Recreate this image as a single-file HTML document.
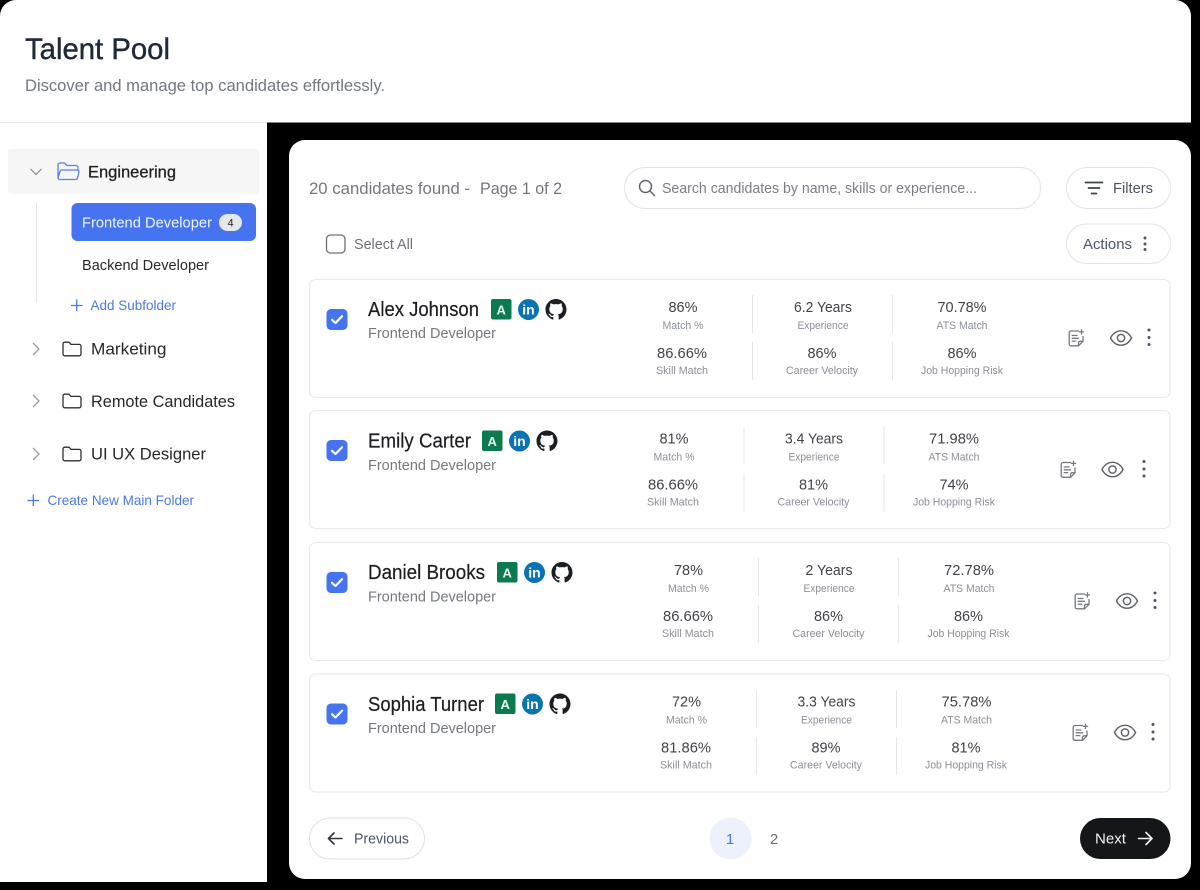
<!DOCTYPE html>
<html><head><meta charset="utf-8"><title>Talent Pool</title>
<style>
html,body{margin:0;padding:0;background:#000;width:1200px;height:890px;overflow:hidden}
svg{display:block}
text{font-family:"Liberation Sans",sans-serif}
.v{font-size:15px;fill:#404349;text-anchor:middle}
.l{font-size:11px;fill:#8b8f97;text-anchor:middle}
.n{font-size:20px;fill:#1c1d20;stroke:#1c1d20;stroke-width:.2px}
.s{font-size:15px;fill:#75797f}
.bl{font-size:14px;fill:#4b78e6}
.f{font-size:17px;fill:#26282c}
.b{font-size:15px;fill:#4b5563}
.a{font-size:13px;font-weight:700;fill:#e8f5ee;text-anchor:middle}
</style></head><body>
<svg width="1200" height="890" viewBox="0 0 1200 890" xmlns="http://www.w3.org/2000/svg">
<defs>
<symbol id="gh" viewBox="0 0 16 16" overflow="visible"><path fill="#1b1f24" d="M8 0C3.58 0 0 3.58 0 8c0 3.54 2.29 6.53 5.47 7.59.4.07.55-.17.55-.38 0-.19-.01-.82-.01-1.49-2.01.37-2.53-.49-2.69-.94-.09-.23-.48-.94-.82-1.13-.28-.15-.68-.52-.01-.53.63-.01 1.08.58 1.23.82.72 1.21 1.87.87 2.33.66.07-.52.28-.87.51-1.07-1.78-.2-3.64-.89-3.64-3.95 0-.87.31-1.59.82-2.15-.08-.2-.36-1.02.08-2.12 0 0 .67-.21 2.2.82.64-.18 1.32-.27 2-.27.68 0 1.36.09 2 .27 1.53-1.04 2.2-.82 2.2-.82.44 1.1.16 1.92.08 2.12.51.56.82 1.27.82 2.15 0 3.07-1.87 3.75-3.65 3.95.29.25.54.73.54 1.48 0 1.07-.01 1.93-.01 2.2 0 .21.15.46.55.38A8.013 8.013 0 0016 8c0-4.42-3.58-8-8-8z"/></symbol>
<symbol id="note" viewBox="0 0 18 18" overflow="visible"><g fill="none" stroke="#75797f" stroke-width="1.300" stroke-linecap="round" stroke-linejoin="round"><path d="M10.5 2H3a1.8 1.8 0 0 0-1.8 1.8V15A1.8 1.8 0 0 0 3 16.800H10.500L15 12.300V7.500"/><path d="M10.500 16.800V13.800A1.500 1.500 0 0 1 12 12.300H15"/><path d="M4.200 6.500H9M4.200 9.300H10.500M4.200 12.100H7.800"/><path d="M13.500 .8V5M11.400 2.900H15.600"/></g></symbol>
<symbol id="eye" viewBox="0 0 24 18" overflow="visible"><g fill="none" stroke="#5f6268" stroke-width="1.500"><path d="M1 9C3.800 3.800 7.800 1.500 12 1.500S20.200 3.800 23 9C20.200 14.200 16.200 16.500 12 16.500S3.800 14.200 1 9Z"/><circle cx="12" cy="9" r="3.800"/></g></symbol>
<symbol id="chk" viewBox="0 0 21 21" overflow="visible"><rect x="0" y="0" width="21" height="21" rx="4.500" fill="#4673f0"/><path d="M5.500 10.800L9 14L15.500 7.200" fill="none" stroke="#fff" stroke-width="2.200" stroke-linecap="round" stroke-linejoin="round"/></symbol>
<symbol id="fold" viewBox="0 0 20 16" overflow="visible"><path d="M1 3A1.800 1.800 0 0 1 2.800 1.200H7L9 3.400H17.200A1.800 1.800 0 0 1 19 5.200V13A1.800 1.800 0 0 1 17.200 14.800H2.800A1.800 1.800 0 0 1 1 13Z" fill="none" stroke="#2d2f33" stroke-width="1.300" stroke-linejoin="round"/></symbol>
</defs>

<rect width="1200" height="890" fill="#000"/>
<!-- header -->
<path d="M16 0H1175A16 16 0 0 1 1191 16V122.500H0V16A16 16 0 0 1 16 0Z" fill="#fff"/>
<rect x="0" y="122" width="267" height="1" fill="#e8e9eb"/>
<text x="25" y="59" font-size="30" fill="#1f2937" textLength="145" lengthAdjust="spacingAndGlyphs" stroke="#1f2937" stroke-width=".4">Talent Pool</text>
<text x="25" y="91" font-size="17" fill="#737780" textLength="360" lengthAdjust="spacingAndGlyphs">Discover and manage top candidates effortlessly.</text>

<!-- sidebar -->
<rect x="0" y="123" width="267" height="759" fill="#fff"/>
<rect x="8" y="149" width="251" height="45" rx="3" fill="#f6f6f7"/>
<path d="M30.500 169L36 174.500L41.500 169" fill="none" stroke="#8f9297" stroke-width="1.300"/>
<path d="M58 165A2 2 0 0 1 60 163H64.500L67 165.500H76A2 2 0 0 1 78 167.500V169.500M58 165V177.500A2 2 0 0 0 60 179.500H75.500A2 2 0 0 0 77.500 178L79 172A1.800 1.800 0 0 0 77 170H62A2 2 0 0 0 60 171.500L58 178" fill="none" stroke="#5c80e8" stroke-width="1.300" stroke-linejoin="round"/>
<text x="88" y="177.500" class="f" style="fill:#1f2024" textLength="88" lengthAdjust="spacingAndGlyphs" stroke="#1f2024" stroke-width=".3">Engineering</text>
<rect x="36" y="203" width="1" height="100" fill="#e3e4e7"/>
<rect x="71.500" y="203" width="184.500" height="38" rx="6" fill="#4673f0"/>
<text x="82" y="227.500" font-size="15" fill="#f2f5ff" textLength="130" lengthAdjust="spacingAndGlyphs">Frontend Developer</text>
<rect x="219" y="214" width="23" height="17" rx="8.500" fill="#e7e8ec"/>
<text x="230.500" y="226.500" font-size="11" fill="#222" text-anchor="middle">4</text>
<text x="82" y="270" font-size="15" fill="#27292d" textLength="127" lengthAdjust="spacingAndGlyphs">Backend Developer</text>
<path d="M71 305.500H82.500M76.700 299.500V311" stroke="#4b78e6" stroke-width="1.300" fill="none"/>
<text x="90.500" y="310" class="bl" textLength="85.500" lengthAdjust="spacingAndGlyphs">Add Subfolder</text>

<path d="M33 343L39 349L33 355" fill="none" stroke="#999ca1" stroke-width="1.300"/>
<use href="#fold" x="62" y="341" width="20" height="16"/>
<text x="91" y="354.500" class="f" textLength="75.500" lengthAdjust="spacingAndGlyphs">Marketing</text>
<path d="M33 395L39 401L33 407" fill="none" stroke="#999ca1" stroke-width="1.300"/>
<use href="#fold" x="62" y="393" width="20" height="16"/>
<text x="91" y="407" class="f" textLength="144" lengthAdjust="spacingAndGlyphs">Remote Candidates</text>
<path d="M33 448L39 454L33 460" fill="none" stroke="#999ca1" stroke-width="1.300"/>
<use href="#fold" x="62" y="446" width="20" height="16"/>
<text x="91" y="459.500" class="f" textLength="115" lengthAdjust="spacingAndGlyphs">UI UX Designer</text>
<path d="M27.500 500.500H39M33.300 494.500V506" stroke="#4b78e6" stroke-width="1.300" fill="none"/>
<text x="47.500" y="505" class="bl" textLength="146.500" lengthAdjust="spacingAndGlyphs">Create New Main Folder</text>

<!-- main panel -->
<rect x="289" y="140" width="902" height="739" rx="16" fill="#fff"/>
<text x="309" y="194" font-size="17" fill="#73777e" textLength="161" lengthAdjust="spacingAndGlyphs">20 candidates found -</text>
<text x="480" y="194" font-size="17" fill="#73777e" textLength="82" lengthAdjust="spacingAndGlyphs">Page 1 of 2</text>
<rect x="624.500" y="167.500" width="416" height="41" rx="20.500" fill="#fff" stroke="#e2e4e7"/>
<circle cx="645.500" cy="186.500" r="6" fill="none" stroke="#63676e" stroke-width="1.500"/>
<path d="M650 191L654.500 195.500" stroke="#63676e" stroke-width="1.500" stroke-linecap="round"/>
<text x="662" y="193" font-size="15" fill="#7a7e86" textLength="315" lengthAdjust="spacingAndGlyphs">Search candidates by name, skills or experience...</text>
<rect x="1066.500" y="167.500" width="104" height="41" rx="20.500" fill="#fff" stroke="#e2e4e7"/>
<path d="M1085.500 182.500H1102.500M1088.500 188H1099.500M1091.500 193.500H1096.500" stroke="#3f434a" stroke-width="1.700" stroke-linecap="round"/>
<text x="1113" y="193" class="b" textLength="40" lengthAdjust="spacingAndGlyphs">Filters</text>
<rect x="326.500" y="235" width="18.500" height="18" rx="4" fill="#fff" stroke="#6b6f76" stroke-width="1.300"/>
<text x="354" y="249" font-size="15" fill="#6d7178" textLength="59" lengthAdjust="spacingAndGlyphs">Select All</text>
<rect x="1066.500" y="224" width="104" height="39.500" rx="19.750" fill="#fff" stroke="#e2e4e7"/>
<text x="1083" y="249" class="b" textLength="49" lengthAdjust="spacingAndGlyphs">Actions</text>
<circle cx="1145" cy="238" r="1.500" fill="#4b5563"/><circle cx="1145" cy="244" r="1.500" fill="#4b5563"/><circle cx="1145" cy="249.500" r="1.500" fill="#4b5563"/>

<!-- card 1 -->
<rect x="309.500" y="279.500" width="860.500" height="118" rx="6" fill="#fff" stroke="#e9eaec"/>
<use href="#chk" x="326.500" y="309" width="21" height="21"/>
<text x="368" y="316" class="n" textLength="111" lengthAdjust="spacingAndGlyphs">Alex Johnson</text>
<text x="368" y="338" class="s" textLength="128" lengthAdjust="spacingAndGlyphs">Frontend Developer</text>
<rect x="491" y="299" width="20.500" height="20.500" rx="2" fill="#0b7a4f"/><text x="501.200" y="314.500" class="a">A</text>
<circle cx="528.500" cy="309.500" r="10.500" fill="#0a73b1"/><text x="528.500" y="314.500" font-size="14" font-weight="700" fill="#fff" text-anchor="middle">in</text>
<use href="#gh" x="545.500" y="299" width="21" height="21"/>
<g>
<text x="683" y="312" class="v" textLength="29" lengthAdjust="spacingAndGlyphs">86%</text><text x="683" y="329" class="l" textLength="41" lengthAdjust="spacingAndGlyphs">Match %</text>
<text x="682" y="358" class="v" textLength="50" lengthAdjust="spacingAndGlyphs">86.66%</text><text x="682" y="374" class="l" textLength="52" lengthAdjust="spacingAndGlyphs">Skill Match</text>
<text x="823" y="312" class="v" textLength="58" lengthAdjust="spacingAndGlyphs">6.2 Years</text><text x="823" y="329" class="l" textLength="51" lengthAdjust="spacingAndGlyphs">Experience</text>
<text x="822" y="358" class="v" textLength="29" lengthAdjust="spacingAndGlyphs">86%</text><text x="822" y="374" class="l" textLength="72" lengthAdjust="spacingAndGlyphs">Career Velocity</text>
<text x="962" y="312" class="v" textLength="49" lengthAdjust="spacingAndGlyphs">70.78%</text><text x="962" y="329" class="l" textLength="51" lengthAdjust="spacingAndGlyphs">ATS Match</text>
<text x="962" y="358" class="v" textLength="29" lengthAdjust="spacingAndGlyphs">86%</text><text x="962" y="374" class="l" textLength="82" lengthAdjust="spacingAndGlyphs">Job Hopping Risk</text>
<path d="M752.500 295V333M752.500 342V380M892.500 295V333M892.500 342V380" stroke="#e6e7ea"/>
</g>
<use href="#note" x="1068" y="329" width="18" height="18"/>
<use href="#eye" x="1109.500" y="329" width="23" height="18"/>
<circle cx="1149" cy="330" r="1.500" fill="#4b5563"/><circle cx="1149" cy="337.500" r="1.500" fill="#4b5563"/><circle cx="1149" cy="344.500" r="1.500" fill="#4b5563"/>

<!-- card 2 -->
<rect x="309.500" y="410.500" width="860.500" height="118" rx="6" fill="#fff" stroke="#e9eaec"/>
<use href="#chk" x="326.500" y="440" width="21" height="21"/>
<text x="368" y="447.500" class="n" textLength="103" lengthAdjust="spacingAndGlyphs">Emily Carter</text>
<text x="368" y="470" class="s" textLength="128" lengthAdjust="spacingAndGlyphs">Frontend Developer</text>
<rect x="482" y="430.500" width="20.500" height="20.500" rx="2" fill="#0b7a4f"/><text x="492.200" y="446" class="a">A</text>
<circle cx="519.500" cy="441" r="10.500" fill="#0a73b1"/><text x="519.500" y="446" font-size="14" font-weight="700" fill="#fff" text-anchor="middle">in</text>
<use href="#gh" x="536.500" y="430.500" width="21" height="21"/>
<text x="674" y="443.500" class="v" textLength="29" lengthAdjust="spacingAndGlyphs">81%</text><text x="674" y="460.500" class="l" textLength="41" lengthAdjust="spacingAndGlyphs">Match %</text>
<text x="673" y="489.500" class="v" textLength="50" lengthAdjust="spacingAndGlyphs">86.66%</text><text x="673" y="505.500" class="l" textLength="52" lengthAdjust="spacingAndGlyphs">Skill Match</text>
<text x="814" y="443.500" class="v" textLength="58" lengthAdjust="spacingAndGlyphs">3.4 Years</text><text x="814" y="460.500" class="l" textLength="51" lengthAdjust="spacingAndGlyphs">Experience</text>
<text x="813.500" y="489.500" class="v" textLength="29" lengthAdjust="spacingAndGlyphs">81%</text><text x="813.500" y="505.500" class="l" textLength="72" lengthAdjust="spacingAndGlyphs">Career Velocity</text>
<text x="954" y="443.500" class="v" textLength="50" lengthAdjust="spacingAndGlyphs">71.98%</text><text x="954" y="460.500" class="l" textLength="51" lengthAdjust="spacingAndGlyphs">ATS Match</text>
<text x="954" y="489.500" class="v" textLength="29" lengthAdjust="spacingAndGlyphs">74%</text><text x="954" y="505.500" class="l" textLength="82" lengthAdjust="spacingAndGlyphs">Job Hopping Risk</text>
<path d="M744 426.500V464.500M744 473.500V511.500M884 426.500V464.500M884 473.500V511.500" stroke="#e6e7ea"/>
<use href="#note" x="1060" y="460.500" width="18" height="18"/>
<use href="#eye" x="1101" y="460.500" width="23" height="18"/>
<circle cx="1144" cy="461.500" r="1.500" fill="#4b5563"/><circle cx="1144" cy="469" r="1.500" fill="#4b5563"/><circle cx="1144" cy="476" r="1.500" fill="#4b5563"/>

<!-- card 3 -->
<rect x="309.500" y="542.500" width="860.500" height="118" rx="6" fill="#fff" stroke="#e9eaec"/>
<use href="#chk" x="326.500" y="572" width="21" height="21"/>
<text x="368" y="579" class="n" textLength="117" lengthAdjust="spacingAndGlyphs">Daniel Brooks</text>
<text x="368" y="601.500" class="s" textLength="128" lengthAdjust="spacingAndGlyphs">Frontend Developer</text>
<rect x="497" y="562" width="20.500" height="20.500" rx="2" fill="#0b7a4f"/><text x="507.200" y="577.500" class="a">A</text>
<circle cx="534.500" cy="572.500" r="10.500" fill="#0a73b1"/><text x="534.500" y="577.500" font-size="14" font-weight="700" fill="#fff" text-anchor="middle">in</text>
<use href="#gh" x="551.500" y="562" width="21" height="21"/>
<text x="688.500" y="575" class="v" textLength="29" lengthAdjust="spacingAndGlyphs">78%</text><text x="688.500" y="592" class="l" textLength="41" lengthAdjust="spacingAndGlyphs">Match %</text>
<text x="688" y="621" class="v" textLength="50" lengthAdjust="spacingAndGlyphs">86.66%</text><text x="688" y="637" class="l" textLength="52" lengthAdjust="spacingAndGlyphs">Skill Match</text>
<text x="829" y="575" class="v" textLength="47" lengthAdjust="spacingAndGlyphs">2 Years</text><text x="829" y="592" class="l" textLength="51" lengthAdjust="spacingAndGlyphs">Experience</text>
<text x="828.500" y="621" class="v" textLength="29" lengthAdjust="spacingAndGlyphs">86%</text><text x="828.500" y="637" class="l" textLength="72" lengthAdjust="spacingAndGlyphs">Career Velocity</text>
<text x="969" y="575" class="v" textLength="50" lengthAdjust="spacingAndGlyphs">72.78%</text><text x="969" y="592" class="l" textLength="51" lengthAdjust="spacingAndGlyphs">ATS Match</text>
<text x="968.500" y="621" class="v" textLength="29" lengthAdjust="spacingAndGlyphs">86%</text><text x="968.500" y="637" class="l" textLength="82" lengthAdjust="spacingAndGlyphs">Job Hopping Risk</text>
<path d="M758.500 558V596M758.500 605V643M898.500 558V596M898.500 605V643" stroke="#e6e7ea"/>
<use href="#note" x="1074" y="592" width="18" height="18"/>
<use href="#eye" x="1115.500" y="592" width="23" height="18"/>
<circle cx="1155" cy="593" r="1.500" fill="#4b5563"/><circle cx="1155" cy="600.500" r="1.500" fill="#4b5563"/><circle cx="1155" cy="607.500" r="1.500" fill="#4b5563"/>

<!-- card 4 -->
<rect x="309.500" y="674" width="860.500" height="118" rx="6" fill="#fff" stroke="#e9eaec"/>
<use href="#chk" x="326.500" y="703.500" width="21" height="21"/>
<text x="368" y="711" class="n" textLength="116" lengthAdjust="spacingAndGlyphs">Sophia Turner</text>
<text x="368" y="733" class="s" textLength="128" lengthAdjust="spacingAndGlyphs">Frontend Developer</text>
<rect x="495" y="693.500" width="20.500" height="20.500" rx="2" fill="#0b7a4f"/><text x="505.200" y="709" class="a">A</text>
<circle cx="532.500" cy="704" r="10.500" fill="#0a73b1"/><text x="532.500" y="709" font-size="14" font-weight="700" fill="#fff" text-anchor="middle">in</text>
<use href="#gh" x="549.500" y="693.500" width="21" height="21"/>
<text x="686.500" y="706.500" class="v" textLength="29" lengthAdjust="spacingAndGlyphs">72%</text><text x="686.500" y="723.500" class="l" textLength="41" lengthAdjust="spacingAndGlyphs">Match %</text>
<text x="686" y="752.500" class="v" textLength="50" lengthAdjust="spacingAndGlyphs">81.86%</text><text x="686" y="768.500" class="l" textLength="52" lengthAdjust="spacingAndGlyphs">Skill Match</text>
<text x="826.500" y="706.500" class="v" textLength="58" lengthAdjust="spacingAndGlyphs">3.3 Years</text><text x="826.500" y="723.500" class="l" textLength="51" lengthAdjust="spacingAndGlyphs">Experience</text>
<text x="826" y="752.500" class="v" textLength="29" lengthAdjust="spacingAndGlyphs">89%</text><text x="826" y="768.500" class="l" textLength="72" lengthAdjust="spacingAndGlyphs">Career Velocity</text>
<text x="966.500" y="706.500" class="v" textLength="50" lengthAdjust="spacingAndGlyphs">75.78%</text><text x="966.500" y="723.500" class="l" textLength="51" lengthAdjust="spacingAndGlyphs">ATS Match</text>
<text x="966" y="752.500" class="v" textLength="29" lengthAdjust="spacingAndGlyphs">81%</text><text x="966" y="768.500" class="l" textLength="82" lengthAdjust="spacingAndGlyphs">Job Hopping Risk</text>
<path d="M756.500 690V728M756.500 737V775M896.500 690V728M896.500 737V775" stroke="#e6e7ea"/>
<use href="#note" x="1072" y="723.500" width="18" height="18"/>
<use href="#eye" x="1113.500" y="723.500" width="23" height="18"/>
<circle cx="1153" cy="724.500" r="1.500" fill="#4b5563"/><circle cx="1153" cy="732" r="1.500" fill="#4b5563"/><circle cx="1153" cy="739" r="1.500" fill="#4b5563"/>

<!-- pagination -->
<rect x="309.500" y="818" width="115" height="41" rx="20.500" fill="#fff" stroke="#dfe1e4"/>
<path d="M342 838.500H328.500M334 833L328.500 838.500L334 844" fill="none" stroke="#33363c" stroke-width="1.600" stroke-linecap="round" stroke-linejoin="round"/>
<text x="354" y="843.500" class="b" textLength="55" lengthAdjust="spacingAndGlyphs">Previous</text>
<circle cx="730.500" cy="838.500" r="21" fill="#edf1fb"/>
<text x="730" y="844" font-size="15" fill="#4b78e6" text-anchor="middle">1</text>
<text x="774" y="844" font-size="15" fill="#6b7078" text-anchor="middle">2</text>
<rect x="1080" y="818" width="90.500" height="41" rx="20.500" fill="#14161a"/>
<text x="1095" y="843.500" font-size="15" fill="#f2f2f2" textLength="31" lengthAdjust="spacingAndGlyphs">Next</text>
<path d="M1138.500 838.500H1152M1146 832.500L1152 838.500L1146 844.500" fill="none" stroke="#f2f2f2" stroke-width="1.600" stroke-linecap="round" stroke-linejoin="round"/>
</svg>
</body></html>
